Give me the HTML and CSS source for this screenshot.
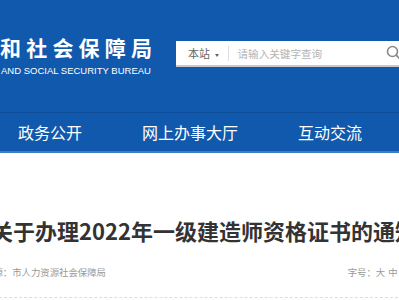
FILE: index.html
```html
<!DOCTYPE html>
<html lang="zh-CN">
<head>
    <meta charset="UTF-8">
    <meta name="viewport" content="width=device-width, initial-scale=1.0">
    <title>关于办理2022年一级建造师资格证书的通知</title>
    <link rel="stylesheet" href="styles.css">
</head>
<body>
    <div class="header">
        <div class="logo">
            <h1>和社会保障局</h1>
            <p>AND SOCIAL SECURITY BUREAU</p>
        </div>
        <form class="search">
            <span class="scope">本站 <i class="caret"></i></span>
            <span class="divider"></span>
            <input type="text" placeholder="请输入关键字查询">
            <svg class="search-icon" width="16" height="16" viewBox="0 0 16 16">
                <circle cx="6.5" cy="6.5" r="5" fill="none" stroke="#8a8a8a" stroke-width="1.6"/>
                <line x1="10.2" y1="10.2" x2="14.5" y2="14.5" stroke="#8a8a8a" stroke-width="1.8"/>
            </svg>
        </form>
    </div>

    <div class="nav">
        <a href="#">政务公开</a>
        <a href="#">网上办事大厅</a>
        <a href="#">互动交流</a>
    </div>

    <div class="article">
        <h2 class="title">关于办理2022年一级建造师资格证书的通知</h2>
        <div class="meta">
            <span>来源：市人力资源社会保障局</span>
            <span class="font-size">字号：<a href="#">大</a><a href="#">中</a><a href="#">小</a></span>
        </div>
    </div>
</body>
</html>
```

FILE: styles.css
```css
html, body {
    margin: 0;
    padding: 0;
    overflow: hidden;
}
body {
    font-family: "Noto Sans CJK SC", "Microsoft YaHei", sans-serif;
    background: #fff;
    width: 399px;
}
.header {
    display: flex;
    align-items: flex-start;
    height: 112px;
    background: #1159ad;
    border-bottom: 1px solid #0c4c98;
}
.logo {
    width: 176px;
    flex-shrink: 0;
    padding-top: 32px;
    color: white;
}
.logo h1 {
    margin: 0;
    font-size: 21px;
    line-height: 30px;
    font-weight: bold;
    letter-spacing: 5.2px;
    white-space: nowrap;
}
.logo p {
    margin: 3px 0 0 1px;
    font-family: "Liberation Sans", Arial, sans-serif;
    font-size: 9.5px;
    line-height: 12px;
    white-space: nowrap;
}
.search {
    display: flex;
    align-items: center;
    flex-shrink: 0;
    width: 240px;
    height: 24px;
    margin: 41px 0 0 0;
    background: white;
    border-bottom: 2px solid #c9c9c9;
}
.scope {
    padding-left: 12px;
    font-size: 11px;
    color: #666;
    white-space: nowrap;
}
.caret {
    display: inline-block;
    margin-left: 3px;
    vertical-align: middle;
    border-top: 3px solid #666;
    border-left: 2.5px solid transparent;
    border-right: 2.5px solid transparent;
}
.divider {
    width: 1px;
    height: 15px;
    margin: 0 8px 0 9px;
    background: #ddd;
}
.search input {
    flex: 1;
    min-width: 0;
    padding: 0;
    border: none;
    outline: none;
    font-family: inherit;
    font-size: 10.6px;
}
.search input::placeholder {
    color: #b4b4b4;
}
.search-icon {
    flex-shrink: 0;
    margin-right: 14px;
}
.nav {
    display: flex;
    height: 38px;
    padding-left: 18px;
    background: #1159ad;
    border-bottom: 2px solid #3a7cc7;
}
.nav a {
    margin-right: 60px;
    color: white;
    font-size: 16px;
    line-height: 38px;
    text-decoration: none;
    white-space: nowrap;
}
.article {
    padding-top: 62px;
}
.title {
    margin: 0 0 0 -9px;
    font-size: 22px;
    line-height: 30px;
    font-weight: bold;
    color: #333;
    white-space: nowrap;
}
.meta {
    display: flex;
    justify-content: space-between;
    width: 429px;
    margin: 21px 0 0 -16px;
    padding-bottom: 19px;
    font-size: 9.4px;
    line-height: 12px;
    color: #999;
    border-bottom: 1px dashed #ddd;
    white-space: nowrap;
}
.font-size a {
    margin-right: 3px;
    color: #999;
    text-decoration: none;
}
```
